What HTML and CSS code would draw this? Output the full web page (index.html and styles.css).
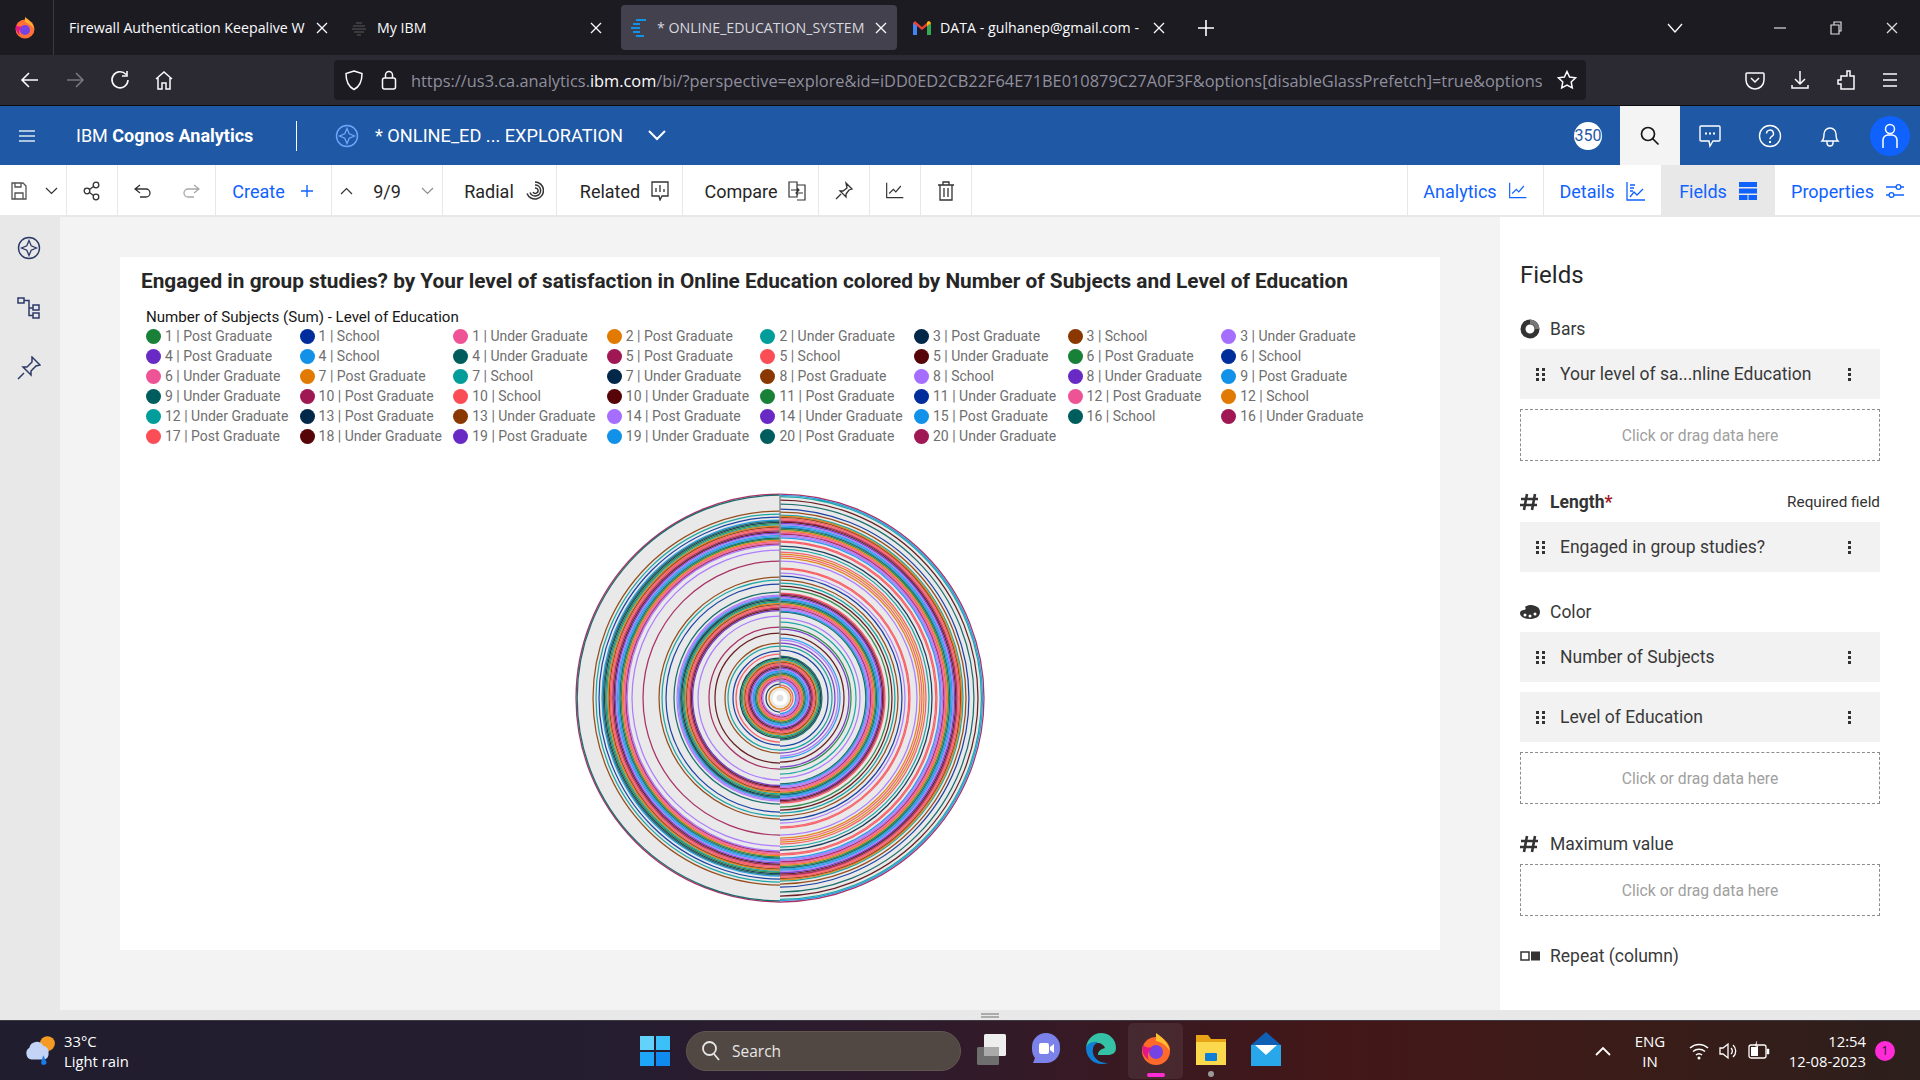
FILE: index.html
```html
<!DOCTYPE html>
<html>
<head>
    <title>IBM Cognos Analytics</title>
    <link rel="stylesheet" href="styles.css">
</head>
<body>
    <svg class="sprite" width="0" height="0">
        <defs>
            <g id="i-close"><path d="M3 3l10 10M13 3L3 13" fill="none" stroke="currentColor" stroke-width="1.3"/></g>
            <g id="i-drag"><path d="M0 0h3v3H0zM6 0h3v3H6zM0 5h3v3H0zM6 5h3v3H6zM0 10h3v3H0zM6 10h3v3H6z" fill="#333"/></g>
            <g id="i-kebab"><path d="M0 0h3v3H0zM0 5h3v3H0zM0 10h3v3H0z" fill="#333"/></g>
            <g id="i-hash"><path d="M7 2L4 18M15 2l-3 16M1 7h17M0 13h17" fill="none" stroke="#333" stroke-width="2.6"/></g>
            <g id="i-explore"><circle cx="12" cy="12" r="10.5" fill="none" stroke="currentColor" stroke-width="1.4"/><path d="M12 4.500l2.200 5.300 5.300 2.200-5.300 2.200-2.200 5.300-2.200-5.300L4.500 12l5.300-2.200z" fill="none" stroke="currentColor" stroke-width="1.3"/></g>
            <g id="i-trend"><path d="M2 2v18h20M5 15l5-5 3 3 6-7" fill="none" stroke="currentColor" stroke-width="1.4"/></g>
        </defs>
    </svg>

    <div class="tabbar">
        <div class="ff-cell">
            <svg width="22" height="24" viewBox="0 0 22 24"><circle cx="11" cy="13" r="9.500" fill="#ff7139"/><path d="M11 1c4 3 8 6 9 12-3-4-6-6-9-7z" fill="#ffb02e"/><circle cx="11" cy="14" r="5" fill="#7542e5"/><path d="M2 9c2 2 5 2 7 1-3 2-5 6-3 9-3-2-5-6-4-10z" fill="#e31587"/></svg>
        </div>
        <div class="tab tab-first">
            <span class="tab-text">Firewall Authentication Keepalive W</span>
            <svg class="tab-x" width="16" height="16"><use href="#i-close"/></svg>
        </div>
        <div class="tab tab-second">
            <svg width="18" height="18" viewBox="0 0 18 18"><path d="M6 3h6v2H6zM3 6h12v2H3zM2 9h14v2H2zM4 12h10v2H4zM7 15h4v2H7z" fill="#3a3a3a"/></svg>
            <span class="tab-text">My IBM</span>
            <svg class="tab-x" width="16" height="16"><use href="#i-close"/></svg>
        </div>
        <div class="tab tab-active">
            <svg width="18" height="20" viewBox="0 0 18 20"><path d="M6 1h10v2H6zM3 5h7v2H3zM1 9h9v2H1zM3 13h7v2H3zM6 17h8v2H6z" fill="#1192e8"/></svg>
            <span class="tab-text">* ONLINE_EDUCATION_SYSTEM</span>
            <svg class="tab-x" width="16" height="16"><use href="#i-close"/></svg>
        </div>
        <div class="tab tab-last">
            <svg width="18" height="14" viewBox="0 0 18 14"><path d="M0 2l2-2 7 6 7-6 2 2v12h-4V5L9 9 4 5v9H0z" fill="#ea4335"/><path d="M0 2v12h4V5z" fill="#4285f4"/><path d="M14 5v9h4V2z" fill="#34a853"/><path d="M16 0l2 2-4 3V1z" fill="#fbbc04"/></svg>
            <span class="tab-text">DATA - gulhanep@gmail.com -</span>
            <svg class="tab-x" width="16" height="16"><use href="#i-close"/></svg>
        </div>
        <svg class="tab-plus" width="18" height="18" viewBox="0 0 18 18"><path d="M9 1v16M1 9h16" stroke="#fff" stroke-width="1.6"/></svg>
        <div class="grow"></div>
        <svg class="tab-list" width="16" height="10" viewBox="0 0 16 10"><path d="M1 1l7 8 7-8" fill="none" stroke="#fff" stroke-width="1.3"/></svg>
        <div class="win-btn"><svg width="14" height="14" viewBox="0 0 14 14"><path d="M1 7h12" stroke="#ddd" stroke-width="1.2"/></svg></div>
        <div class="win-btn"><svg width="14" height="14" viewBox="0 0 14 14"><path d="M2 4h8v9H2zM5 4V1h7v9h-2" fill="none" stroke="#ddd" stroke-width="1.2"/></svg></div>
        <div class="win-btn"><svg width="16" height="16" class="win-x"><use href="#i-close"/></svg></div>
    </div>

    <div class="navbar">
        <svg class="nav-icon nav-back" width="20" height="18" viewBox="0 0 20 18"><path d="M18 9H2M9 2L2 9l7 7" fill="none" stroke="#fbfbfe" stroke-width="1.6"/></svg>
        <svg class="nav-icon nav-fwd" width="20" height="18" viewBox="0 0 20 18"><path d="M2 9h16M11 2l7 7-7 7" fill="none" stroke="#77767c" stroke-width="1.6"/></svg>
        <svg class="nav-icon nav-reload" width="20" height="20" viewBox="0 0 20 20"><path d="M16 4.500A8 8 0 1 0 18 10M17 1v5h-5" fill="none" stroke="#fbfbfe" stroke-width="1.6"/></svg>
        <svg class="nav-icon nav-home" width="20" height="20" viewBox="0 0 20 20"><path d="M2 9l8-7 8 7M4 8v11h4v-6h4v6h4V8" fill="none" stroke="#fbfbfe" stroke-width="1.5"/></svg>
        <div class="urlbox">
            <svg width="20" height="22" viewBox="0 0 20 22"><path d="M10 2l8 2.500c0 8-2 13-8 16-6-3-8-8-8-16z" fill="none" stroke="#fbfbfe" stroke-width="1.5"/></svg>
            <svg class="url-lock" width="16" height="20" viewBox="0 0 16 20"><rect x="1.500" y="8" width="13" height="11" rx="2" fill="none" stroke="#fbfbfe" stroke-width="1.5"/><path d="M4.500 8V5a3.500 3.500 0 0 1 7 0v3" fill="none" stroke="#fbfbfe" stroke-width="1.5"/></svg>
            <div class="url-text">https://us3.ca.analytics.<b>ibm.com</b>/bi/?perspective=explore&amp;id=iDD0ED2CB22F64E71BE010879C27A0F3F&amp;options[disableGlassPrefetch]=true&amp;options</div>
            <svg width="20" height="20" viewBox="0 0 20 20"><path d="M10 1.500l2.600 5.500 6 .8-4.400 4.100 1.100 6L10 15l-5.300 2.900 1.100-6L1.400 7.800l6-.8z" fill="none" stroke="#fbfbfe" stroke-width="1.5"/></svg>
        </div>
        <svg class="nav-icon nav-pocket" width="20" height="20" viewBox="0 0 20 20"><path d="M2 3h16a1 1 0 0 1 1 1v6a9 9 0 0 1-18 0V4a1 1 0 0 1 1-1zM6 8l4 4 4-4" fill="none" stroke="#fbfbfe" stroke-width="1.500"/></svg>
        <svg class="nav-icon nav-down" width="20" height="20" viewBox="0 0 20 20"><path d="M10 1v13M5 9l5 5 5-5M2 15v3h16v-3" fill="none" stroke="#fbfbfe" stroke-width="1.500"/></svg>
        <svg class="nav-icon nav-ext" width="20" height="22" viewBox="0 0 20 22"><path d="M11 2h3v5h4v13H5v-5H2v-4h3V7h6z" fill="none" stroke="#fbfbfe" stroke-width="1.500"/></svg>
        <svg class="nav-icon nav-menu" width="18" height="16" viewBox="0 0 18 16"><path d="M2 2h14M2 8h14M2 14h14" stroke="#fbfbfe" stroke-width="1.500"/></svg>
    </div>

    <div class="appbar">
        <svg class="app-menu" width="16" height="14" viewBox="0 0 16 14"><path d="M0 2h16M0 7h16M0 12h16" stroke="#dce6f5" stroke-width="1.600"/></svg>
        <div class="app-name">IBM <b>Cognos Analytics</b></div>
        <div class="app-sep"></div>
        <svg class="app-explore" width="24" height="24" viewBox="0 0 24 24"><use href="#i-explore"/></svg>
        <div class="app-title">* ONLINE_ED ... EXPLORATION</div>
        <svg class="app-chev" width="18" height="11" viewBox="0 0 18 11"><path d="M1 1l8 8 8-8" fill="none" stroke="#fff" stroke-width="2"/></svg>
        <div class="grow"></div>
        <div class="app-badge">350</div>
        <div class="app-search"><svg width="20" height="20" viewBox="0 0 20 20"><circle cx="8" cy="8" r="6.500" fill="none" stroke="#161616" stroke-width="1.700"/><path d="M12.500 12.500l6 6" stroke="#161616" stroke-width="1.700"/></svg></div>
        <div class="app-btn"><svg width="22" height="24" viewBox="0 0 22 24"><path d="M2 2h18a1 1 0 0 1 1 1v13a1 1 0 0 1-1 1h-6l-3 5-1-5H2a1 1 0 0 1-1-1V3a1 1 0 0 1 1-1z" fill="none" stroke="#fff" stroke-width="1.400"/><path d="M6 8.500h2v2H6zM10 8.500h2v2h-2zM14 8.500h2v2h-2z" fill="#fff"/></svg></div>
        <div class="app-btn"><svg width="24" height="24" viewBox="0 0 24 24"><circle cx="12" cy="12" r="10.500" fill="none" stroke="#fff" stroke-width="1.400"/><path d="M8.500 9.500a3.500 3.500 0 1 1 5 3.200c-1 .5-1.500 1.300-1.500 2.500" fill="none" stroke="#fff" stroke-width="1.400"/><path d="M11 17h2v2h-2z" fill="#fff"/></svg></div>
        <div class="app-btn"><svg width="22" height="24" viewBox="0 0 22 24"><path d="M3 17c2-2 2-4 2-7a6 6 0 0 1 12 0c0 3 0 5 2 7zM8 17v2a3 3 0 0 0 6 0v-2" fill="none" stroke="#fff" stroke-width="1.400"/></svg></div>
        <div class="app-user"><svg width="18" height="26" viewBox="0 0 18 26"><circle cx="9" cy="6" r="4.500" fill="none" stroke="#fff" stroke-width="1.500"/><path d="M2 25v-8a5 5 0 0 1 5-5h4a5 5 0 0 1 5 5v8" fill="none" stroke="#fff" stroke-width="1.500"/></svg></div>
    </div>

    <div class="toolbar">
        <div class="seg seg-save">
            <svg width="16" height="18" viewBox="0 0 16 18"><path d="M1 1h11l3 3v13H1zM4 17v-6h8v6M4 1v4h6V1" fill="none" stroke="#525252" stroke-width="1.300"/></svg>
            <svg width="13" height="8" viewBox="0 0 13 8"><path d="M1 1l5.500 5.500L12 1" fill="none" stroke="#333" stroke-width="1.200"/></svg>
        </div>
        <div class="seg seg-share">
            <svg width="18" height="20" viewBox="0 0 18 20"><circle cx="13" cy="4" r="2.800" fill="none" stroke="#333" stroke-width="1.300"/><circle cx="13" cy="16" r="2.800" fill="none" stroke="#333" stroke-width="1.300"/><circle cx="4" cy="10" r="2.800" fill="none" stroke="#333" stroke-width="1.300"/><path d="M6.500 8.500l4-3M6.500 11.500l4 3" stroke="#333" stroke-width="1.300"/></svg>
        </div>
        <div class="seg seg-undo">
            <svg width="18" height="14" viewBox="0 0 18 14"><path d="M6 1L1 5l5 4M1 5h11a4 4 0 0 1 0 8H6" fill="none" stroke="#333" stroke-width="1.300"/></svg>
            <svg width="18" height="14" viewBox="0 0 18 14"><path d="M12 1l5 4-5 4M17 5H6a4 4 0 0 0 0 8h6" fill="none" stroke="#a8a8a8" stroke-width="1.300"/></svg>
        </div>
        <div class="seg seg-create">
            <span class="blue">Create</span>
            <svg width="12" height="12" viewBox="0 0 12 12"><path d="M6 0v12M0 6h12" stroke="#0f62fe" stroke-width="1.400"/></svg>
        </div>
        <div class="seg seg-page">
            <svg width="13" height="8" viewBox="0 0 13 8"><path d="M1 7l5.500-5.500L12 7" fill="none" stroke="#333" stroke-width="1.200"/></svg>
            <span>9/9</span>
            <svg width="13" height="8" viewBox="0 0 13 8"><path d="M1 1l5.500 5.500L12 1" fill="none" stroke="#8d8d8d" stroke-width="1.200"/></svg>
        </div>
        <div class="seg seg-radial">
            <span>Radial</span>
            <svg width="20" height="20" viewBox="0 0 20 20"><path d="M11 1a8.500 8.500 0 1 1-8 11.500M11 4a5.500 5.500 0 1 1-5 7.500M11 7a2.700 2.700 0 1 1-2 4" fill="none" stroke="#333" stroke-width="1.500"/></svg>
        </div>
        <div class="seg seg-related">
            <span>Related</span>
            <svg width="18" height="20" viewBox="0 0 18 20"><path d="M1 1h16v14h-6l-2 4-1-4H1zM5 11V7M9 11V4M13 11V8" fill="none" stroke="#333" stroke-width="1.300"/></svg>
        </div>
        <div class="seg seg-compare">
            <span>Compare</span>
            <svg width="18" height="20" viewBox="0 0 18 20"><path d="M1 1h8v15H1zM9 4h8v15H9M3 9h8M9 7l2 2-2 2M15 12H8M10 10l-2 2 2 2" fill="none" stroke="#333" stroke-width="1.200"/></svg>
        </div>
        <div class="seg seg-icon">
            <svg width="20" height="20" viewBox="0 0 20 20"><path d="M12 2l6 6-3 1-3 4 0 3-6-6 3 0 4-3zM7 13l-5 5" fill="none" stroke="#333" stroke-width="1.300"/></svg>
        </div>
        <div class="seg seg-icon">
            <svg width="20" height="20" viewBox="0 0 24 24" class="dark"><use href="#i-trend"/></svg>
        </div>
        <div class="seg seg-icon">
            <svg width="16" height="20" viewBox="0 0 16 20"><path d="M0 4h16M5 4V1h6v3M2 4v15h12V4M6 7v9M10 7v9" fill="none" stroke="#333" stroke-width="1.300"/></svg>
        </div>
        <div class="grow"></div>
        <div class="seg seg-analytics">
            <span class="blue">Analytics</span>
            <svg width="20" height="20" viewBox="0 0 24 24" class="blue"><use href="#i-trend"/></svg>
        </div>
        <div class="seg seg-details">
            <span class="blue">Details</span>
            <svg width="20" height="20" viewBox="0 0 20 20"><path d="M1 1v18h18M4 4h5M4 7h4M4 10h3M4 16l4-5 3 3 6-6" fill="none" stroke="#0f62fe" stroke-width="1.300"/></svg>
        </div>
        <div class="seg seg-fields">
            <span class="blue">Fields</span>
            <svg width="18" height="18" viewBox="0 0 18 18"><path d="M0 0h18v5H0zM0 6.500h18v5H0zM0 13h8.500v5H0zM9.500 13H18v5H9.500z" fill="#0f62fe"/></svg>
        </div>
        <div class="seg seg-props">
            <span class="blue">Properties</span>
            <svg width="18" height="18" viewBox="0 0 18 18"><path d="M0 5h10M15 5h3M0 13h3M8 13h10" stroke="#0f62fe" stroke-width="1.300"/><circle cx="12.500" cy="5" r="2.400" fill="none" stroke="#0f62fe" stroke-width="1.300"/><circle cx="5.500" cy="13" r="2.400" fill="none" stroke="#0f62fe" stroke-width="1.300"/></svg>
        </div>
    </div>

    <div class="main">
        <div class="rail">
            <svg width="24" height="24" viewBox="0 0 24 24" class="rail-icon"><use href="#i-explore"/></svg>
            <svg width="24" height="24" viewBox="0 0 24 24" class="rail-icon"><path d="M1 2h6v5H1zM7 4.500h5v15h4M12 12h4M16 9h6v5h-6zM16 17h6v5h-6z" fill="none" stroke="currentColor" stroke-width="1.500"/></svg>
            <svg width="24" height="24" viewBox="0 0 24 24" class="rail-icon"><path d="M15 1l8 8-4 1-5 5 0 4-8-8 4 0 5-5zM7 17l-6 6" fill="none" stroke="currentColor" stroke-width="1.500"/></svg>
        </div>

        <div class="canvas">
            <div class="card">
                <h1 class="card-title">Engaged in group studies? by Your level of satisfaction in Online Education colored by Number of Subjects and Level of Education</h1>
                <div class="legend-title">Number of Subjects (Sum) - Level of Education</div>
                <div class="legend">
                    <div class="item"><i class="green"></i>1 | Post Graduate</div>
                    <div class="item"><i class="blue-d"></i>1 | School</div>
                    <div class="item"><i class="pink"></i>1 | Under Graduate</div>
                    <div class="item"><i class="orange"></i>2 | Post Graduate</div>
                    <div class="item"><i class="teal"></i>2 | Under Graduate</div>
                    <div class="item"><i class="navy"></i>3 | Post Graduate</div>
                    <div class="item"><i class="brown"></i>3 | School</div>
                    <div class="item"><i class="lilac"></i>3 | Under Graduate</div>

                    <div class="item"><i class="purple"></i>4 | Post Graduate</div>
                    <div class="item"><i class="sky"></i>4 | School</div>
                    <div class="item"><i class="dteal"></i>4 | Under Graduate</div>
                    <div class="item"><i class="magenta"></i>5 | Post Graduate</div>
                    <div class="item"><i class="coral"></i>5 | School</div>
                    <div class="item"><i class="dred"></i>5 | Under Graduate</div>
                    <div class="item"><i class="green"></i>6 | Post Graduate</div>
                    <div class="item"><i class="blue-d"></i>6 | School</div>

                    <div class="item"><i class="pink"></i>6 | Under Graduate</div>
                    <div class="item"><i class="orange"></i>7 | Post Graduate</div>
                    <div class="item"><i class="teal"></i>7 | School</div>
                    <div class="item"><i class="navy"></i>7 | Under Graduate</div>
                    <div class="item"><i class="brown"></i>8 | Post Graduate</div>
                    <div class="item"><i class="lilac"></i>8 | School</div>
                    <div class="item"><i class="purple"></i>8 | Under Graduate</div>
                    <div class="item"><i class="sky"></i>9 | Post Graduate</div>

                    <div class="item"><i class="dteal"></i>9 | Under Graduate</div>
                    <div class="item"><i class="magenta"></i>10 | Post Graduate</div>
                    <div class="item"><i class="coral"></i>10 | School</div>
                    <div class="item"><i class="dred"></i>10 | Under Graduate</div>
                    <div class="item"><i class="green"></i>11 | Post Graduate</div>
                    <div class="item"><i class="blue-d"></i>11 | Under Graduate</div>
                    <div class="item"><i class="pink"></i>12 | Post Graduate</div>
                    <div class="item"><i class="orange"></i>12 | School</div>

                    <div class="item"><i class="teal"></i>12 | Under Graduate</div>
                    <div class="item"><i class="navy"></i>13 | Post Graduate</div>
                    <div class="item"><i class="brown"></i>13 | Under Graduate</div>
                    <div class="item"><i class="lilac"></i>14 | Post Graduate</div>
                    <div class="item"><i class="purple"></i>14 | Under Graduate</div>
                    <div class="item"><i class="sky"></i>15 | Post Graduate</div>
                    <div class="item"><i class="dteal"></i>16 | School</div>
                    <div class="item"><i class="magenta"></i>16 | Under Graduate</div>

                    <div class="item"><i class="coral"></i>17 | Post Graduate</div>
                    <div class="item"><i class="dred"></i>18 | Under Graduate</div>
                    <div class="item"><i class="purple"></i>19 | Post Graduate</div>
                    <div class="item"><i class="sky"></i>19 | Under Graduate</div>
                    <div class="item"><i class="dteal"></i>20 | Post Graduate</div>
                    <div class="item"><i class="magenta"></i>20 | Under Graduate</div>
                </div>
                <svg id="radial" class="radial" width="420" height="420" viewBox="-210 -210 420 420"></svg>
            </div>
        </div>

        <div class="panel">
            <h2 class="panel-title">Fields</h2>

            <div class="slot-head">
                <svg width="20" height="20" viewBox="0 0 20 20"><circle cx="10" cy="10" r="7" fill="none" stroke="#333" stroke-width="5"/><path d="M10 0.500a9.500 9.500 0 0 1 9.500 9.500h-4.500a5 5 0 0 0-5-5z" fill="#777"/></svg>
                <span>Bars</span>
            </div>
            <div class="field">
                <svg class="drag" width="9" height="13"><use href="#i-drag"/></svg>
                <span class="field-name">Your level of sa...nline Education</span>
                <svg class="kebab" width="3" height="13"><use href="#i-kebab"/></svg>
            </div>
            <div class="drop">Click or drag data here</div>

            <div class="slot-head slot-length">
                <svg width="20" height="20" viewBox="0 0 20 20"><use href="#i-hash"/></svg>
                <span class="strong">Length<em>*</em></span>
                <small>Required field</small>
            </div>
            <div class="field">
                <svg class="drag" width="9" height="13"><use href="#i-drag"/></svg>
                <span class="field-name">Engaged in group studies?</span>
                <svg class="kebab" width="3" height="13"><use href="#i-kebab"/></svg>
            </div>

            <div class="slot-head slot-color">
                <svg width="20" height="16" viewBox="0 0 20 16"><path d="M10 1c5 0 10 2 10 7s-5 7-10 7S0 13 0 9c0-2 2-3 4-3 2 0 2-2 1-3 1-1 3-2 5-2z" fill="#333"/><circle cx="5" cy="11" r="1.500" fill="#fff"/><circle cx="10" cy="12" r="1.500" fill="#fff"/><circle cx="15" cy="10" r="1.500" fill="#fff"/></svg>
                <span>Color</span>
            </div>
            <div class="field">
                <svg class="drag" width="9" height="13"><use href="#i-drag"/></svg>
                <span class="field-name">Number of Subjects</span>
                <svg class="kebab" width="3" height="13"><use href="#i-kebab"/></svg>
            </div>
            <div class="field field-next">
                <svg class="drag" width="9" height="13"><use href="#i-drag"/></svg>
                <span class="field-name">Level of Education</span>
                <svg class="kebab" width="3" height="13"><use href="#i-kebab"/></svg>
            </div>
            <div class="drop">Click or drag data here</div>

            <div class="slot-head slot-max">
                <svg width="20" height="20" viewBox="0 0 20 20"><use href="#i-hash"/></svg>
                <span>Maximum value</span>
            </div>
            <div class="drop drop-max">Click or drag data here</div>

            <div class="slot-head slot-repeat">
                <svg width="20" height="10" viewBox="0 0 20 10"><rect x="1" y="1" width="8" height="8" fill="#fff" stroke="#333" stroke-width="1.500"/><rect x="11" y="0.500" width="9" height="9" fill="#333"/></svg>
                <span>Repeat (column)</span>
            </div>
        </div>
    </div>

    <div class="strip">
        <svg width="18" height="5" viewBox="0 0 18 5"><path d="M0 1h18M0 4h18" stroke="#6f6f6f" stroke-width="1"/></svg>
    </div>

    <div class="taskbar">
        <div class="weather">
            <svg width="34" height="34" viewBox="0 0 32 32"><circle cx="23" cy="9" r="7" fill="#f59a23"/><path d="M8 24a6 6 0 0 1-2-11 7 7 0 0 1 13-2 6 6 0 0 1 5 7 5 5 0 0 1-4 6z" fill="#c3d4f7"/><path d="M19 20l3 6a2.500 2.500 0 0 1-5 1z" fill="#1a7ce8"/></svg>
            <div class="weather-text"><div>33°C</div><div>Light rain</div></div>
        </div>
        <div class="start">
            <svg width="30" height="30" viewBox="0 0 30 30"><path d="M0 0h14v14H0z" fill="#62d2fa"/><path d="M16 0h14v14H16z" fill="#3cc0f8"/><path d="M0 16h14v14H0z" fill="#1ea7f8"/><path d="M16 16h14v14H16z" fill="#0f8bf0"/></svg>
        </div>
        <div class="search">
            <svg width="20" height="22" viewBox="0 0 20 22"><circle cx="8.500" cy="8.500" r="6.500" fill="none" stroke="#e6e6e6" stroke-width="1.800"/><path d="M13 14l5 6" stroke="#e6e6e6" stroke-width="1.800"/></svg>
            <span>Search</span>
        </div>
        <div class="task-icons">
            <div class="task"><svg width="32" height="32" viewBox="0 0 32 32"><rect x="2" y="14" width="22" height="18" rx="1.500" fill="#6e6e6e"/><rect x="9" y="1" width="22" height="22" rx="1.500" fill="#eee"/><rect x="9" y="14" width="15" height="9" fill="#aaa"/></svg></div>
            <div class="task"><svg width="30" height="34" viewBox="0 0 30 34"><path d="M15 1a14 14 0 0 1 14 14v2a14 14 0 0 1-14 14H2l2-5a14 14 0 0 1-3-9v-2A14 14 0 0 1 15 1z" fill="#7b83eb"/><rect x="8" y="11" width="10" height="11" rx="2" fill="#fff"/><path d="M19 15l4-3v9l-4-3z" fill="#fff"/></svg></div>
            <div class="task"><svg width="32" height="34" viewBox="0 0 32 34"><path d="M1 17C1 8 8 1 16 1s15 6 15 15c0 5-4 7-8 7H13c0-4 3-6 7-7-1-3-4-5-7-5-6 0-12 3-12 6z" fill="#35c1a5"/><path d="M1 17c0-5 6-8 12-7-4 2-6 6-5 11 1 6 7 10 14 10 1 0 2 0 2-.5A16 16 0 0 1 1 17z" fill="#0f7fd6"/></svg></div>
            <div class="task task-on">
                <svg width="30" height="34" viewBox="0 0 30 34"><circle cx="15" cy="19" r="14" fill="#ff6a2c"/><path d="M15 1c6 4 12 9 14 18-4-6-8-9-14-10z" fill="#ffc02e"/><circle cx="15" cy="20" r="7" fill="#7542e5"/><path d="M2 13c3 3 7 3 10 2-4 3-7 8-4 13-5-3-8-9-6-15z" fill="#e31587"/></svg>
                <b></b>
            </div>
            <div class="task task-open">
                <svg width="30" height="32" viewBox="0 0 30 32"><path d="M0 2h12l3 4h15v26H0z" fill="#e8a317"/><path d="M0 9h30v23H0z" fill="#fcd94c"/><rect x="9" y="20" width="12" height="8" rx="1" fill="#0f7fd6"/></svg>
                <b></b>
            </div>
            <div class="task"><svg width="30" height="34" viewBox="0 0 30 34"><path d="M15 0l15 13v21H0V13z" fill="#0f5fb4"/><path d="M0 13h30v21H0z" fill="#28a8ea"/><path d="M4 13h22l-11 10z" fill="#fff"/></svg></div>
        </div>
        <div class="grow"></div>
        <div class="tray">
            <svg class="tray-up" width="16" height="10" viewBox="0 0 16 10"><path d="M1 9l7-7 7 7" fill="none" stroke="#fff" stroke-width="1.800"/></svg>
            <div class="lang"><div>ENG</div><div>IN</div></div>
            <svg class="tray-wifi" width="20" height="20" viewBox="0 0 20 20"><path d="M1 7a13 13 0 0 1 18 0M4 10.500a9 9 0 0 1 12 0M7 14a4.500 4.500 0 0 1 6 0" fill="none" stroke="#fff" stroke-width="1.500"/><circle cx="10" cy="17" r="1.500" fill="#fff"/></svg>
            <svg class="tray-vol" width="20" height="20" viewBox="0 0 20 20"><path d="M1 7h3l5-4v14l-5-4H1zM12 7a4 4 0 0 1 0 6M14 4a8 8 0 0 1 0 12" fill="none" stroke="#fff" stroke-width="1.300"/></svg>
            <svg class="tray-bat" width="22" height="20" viewBox="0 0 22 20"><rect x="1" y="4" width="17" height="13" rx="2" fill="none" stroke="#fff" stroke-width="1.300"/><rect x="3" y="6" width="7" height="9" fill="#fff"/><path d="M19 8h2v5h-2zM9 0l-2 5h3l-2 5" fill="#fff" stroke="#fff" stroke-width=".5"/></svg>
            <div class="clock"><div>12:54</div><div>12-08-2023</div></div>
            <div class="notify">1</div>
        </div>
    </div>

    <script src="chart.js"></script>
</body>
</html>
```

FILE: styles.css
```css
* {
    box-sizing: border-box;
}

html, body {
    margin: 0;
    padding: 0;
}

body {
    width: 1920px;
    height: 1080px;
    overflow: hidden;
    display: flex;
    flex-direction: column;
    font-family: Roboto, "Noto Sans", sans-serif;
    background: #f4f4f4;
    color: #262626;
}

svg {
    display: block;
    flex: none;
}

.sprite {
    position: absolute;
}

.grow {
    flex: 1;
}

/* browser tabs */
.tabbar {
    height: 55px;
    background: #1c1b22;
    display: flex;
    align-items: center;
    color: #fbfbfe;
    font-family: "Open Sans", sans-serif;
    font-size: 14.200px;
}

.ff-cell {
    width: 54px;
    height: 55px;
    border-right: 1px solid #3a3944;
    display: flex;
    align-items: center;
    justify-content: center;
    padding-right: 4px;
}

.tab {
    height: 45px;
    display: flex;
    align-items: center;
    gap: 9px;
    color: #fbfbfe;
}

.tab-text {
    flex: 1;
    white-space: nowrap;
}

.tab-x {
    color: #fbfbfe;
}

.tab-first {
    width: 276px;
    padding: 0 7px 0 15px;
}

.tab-second {
    width: 275px;
    margin-left: 9px;
    padding: 0 10px 0 11px;
}

.tab-active {
    width: 276px;
    margin-left: 7px;
    padding: 0 12px 0 9px;
    background: #42414d;
    border-radius: 4px;
    color: #d8d8df;
}

.tab-last {
    width: 270px;
    margin-left: 3px;
    padding: 0 3px 0 13px;
}

.tab-plus {
    margin-left: 27px;
}

.tab-list {
    margin-right: 69px;
}

.win-btn {
    width: 56px;
    display: flex;
    justify-content: center;
}

.win-x {
    color: #ddd;
}

/* address bar */
.navbar {
    height: 51px;
    background: #2b2a33;
    border-bottom: 1px solid #0c0c0d;
    display: flex;
    align-items: center;
    padding-left: 20px;
}

.nav-fwd {
    margin-left: 25px;
}

.nav-reload {
    margin-left: 25px;
}

.nav-home {
    margin-left: 24px;
}

.urlbox {
    width: 1252px;
    height: 40px;
    margin-left: 160px;
    background: #1c1b22;
    border-radius: 4px;
    display: flex;
    align-items: center;
    padding: 0 9px 0 10px;
}

.url-lock {
    margin-left: 17px;
}

.url-text {
    width: 1134px;
    margin: 2px 12px 0 14px;
    white-space: nowrap;
    color: #8f8f9d;
    font-family: "Open Sans", sans-serif;
    font-size: 16.380px;
}

.url-text b {
    color: #fbfbfe;
    font-weight: 400;
}

.nav-pocket {
    margin-left: 159px;
}

.nav-down {
    margin-left: 25px;
}

.nav-ext {
    margin-left: 26px;
}

.nav-menu {
    margin-left: 25px;
}

/* cognos header */
.appbar {
    height: 59px;
    background: #1f58a4;
    display: flex;
    align-items: center;
    color: #fff;
    padding-left: 19px;
}

.app-menu {
    margin-right: 41px;
}

.app-name {
    width: 220px;
    font-size: 18px;
    color: #fff;
}

.app-name b {
    font-weight: 700;
}

.app-sep {
    width: 1px;
    height: 30px;
    background: #fff;
}

.app-explore {
    margin-left: 38px;
    color: #6ea6ff;
}

.app-title {
    width: 270px;
    margin-left: 16px;
    font-size: 18.200px;
    white-space: nowrap;
}

.app-chev {
    margin-left: 3px;
}

.app-badge {
    width: 28px;
    height: 28px;
    border-radius: 50%;
    background: #fff;
    color: #1f58a4;
    font-size: 16px;
    display: flex;
    align-items: center;
    justify-content: center;
    margin-right: 18px;
}

.app-search {
    width: 60px;
    height: 59px;
    background: #f4f4f4;
    display: flex;
    align-items: center;
    justify-content: center;
}

.app-btn {
    width: 60px;
    display: flex;
    justify-content: center;
}

.app-user {
    width: 40px;
    height: 40px;
    margin: 0 10px;
    border-radius: 50%;
    background: #0f62fe;
    display: flex;
    align-items: center;
    justify-content: center;
}

/* action toolbar */
.toolbar {
    height: 52px;
    background: #fff;
    border-bottom: 2px solid #e8e8e8;
    display: flex;
    font-size: 18px;
    color: #262626;
}

.seg {
    display: flex;
    align-items: center;
    justify-content: center;
    padding-top: 2px;
    border-right: 1px solid #e8e8e8;
}

.blue {
    color: #0f62fe;
}

.dark {
    color: #333;
}

.seg-save {
    width: 67px;
    gap: 18px;
    padding-left: 2px;
}

.seg-share {
    width: 51px;
}

.seg-undo {
    width: 98px;
    gap: 30px;
}

.seg-create {
    width: 116px;
    gap: 16px;
    padding-right: 2px;
}

.seg-page {
    width: 111px;
    gap: 20px;
}

.seg-radial {
    width: 114px;
    gap: 10px;
    padding-left: 9px;
}

.seg-related {
    width: 126px;
    gap: 11px;
    padding-left: 10px;
}

.seg-compare {
    width: 136px;
    gap: 10px;
    padding-left: 9px;
}

.seg-icon {
    width: 51px;
}

.seg-analytics {
    width: 137px;
    gap: 11px;
    border-left: 1px solid #e8e8e8;
}

.seg-details {
    width: 118px;
    gap: 11px;
}

.seg-fields {
    width: 113px;
    gap: 12px;
    background: #e8e8e8;
}

.seg-props {
    width: 145px;
    gap: 12px;
    border-right: none;
}

/* work area */
.main {
    flex: 1;
    display: flex;
    min-height: 0;
}

.rail {
    width: 60px;
    background: #e8e8e8;
    display: flex;
    flex-direction: column;
    align-items: center;
    gap: 36px;
    padding: 19px 2px 0 0;
}

.rail-icon {
    color: #2b3a67;
}

.canvas {
    flex: 1;
    background: #f3f3f3;
    padding: 40px 60px 0;
}

.card {
    height: 693px;
    background: #fff;
    padding-top: 12px;
}

.card-title {
    margin: 0 0 14px 21px;
    font-size: 20.800px;
    line-height: 24px;
    font-weight: 700;
    color: #262626;
    white-space: nowrap;
}

.legend-title {
    margin-left: 26px;
    font-size: 15.100px;
    line-height: 20px;
    color: #161616;
}

.legend {
    margin: -1px 0 0 26px;
    display: grid;
    grid-template-columns: repeat(8, 153.600px);
    grid-auto-rows: 20px;
}

.item {
    display: flex;
    align-items: center;
    gap: 4px;
    font-size: 14px;
    white-space: nowrap;
    color: #6f6f6f;
}

.item i {
    width: 15px;
    height: 15px;
    border-radius: 50%;
    flex: none;
}

.green { background: #198038; }
.blue-d { background: #002d9c; }
.pink { background: #ee5396; }
.orange { background: #e17a00; }
.teal { background: #009d9a; }
.navy { background: #012749; }
.brown { background: #8a3800; }
.lilac { background: #a56eff; }
.purple { background: #6929c4; }
.sky { background: #1192e8; }
.dteal { background: #005d5d; }
.magenta { background: #9f1853; }
.coral { background: #fa4d56; }
.dred { background: #570408; }

.radial {
    margin: 42px auto 0;
}

/* fields panel */
.panel {
    width: 420px;
    background: #fff;
    padding: 0 40px 0 20px;
    font-size: 17.500px;
    color: #393939;
}

.panel-title {
    margin: 42px 0 0;
    font-size: 24px;
    line-height: 32px;
    font-weight: 400;
    color: #262626;
}

.slot-head {
    height: 24px;
    display: flex;
    align-items: center;
    gap: 10px;
    margin-top: 26px;
    margin-bottom: 8px;
}

.slot-length {
    margin-top: 29px;
}

.slot-color {
    margin-top: 28px;
}

.slot-max {
    margin-top: 28px;
}

.slot-repeat {
    margin-top: 28px;
}

.strong {
    font-weight: 700;
    color: #333;
}

.strong em {
    font-style: normal;
    color: #a2191f;
}

.slot-head small {
    margin-left: auto;
    font-size: 15.300px;
    color: #333;
}

.field {
    height: 50px;
    background: #f2f2f2;
    display: flex;
    align-items: center;
    padding: 0 29px 0 16px;
}

.field-next {
    margin-top: 10px;
}

.field-name {
    flex: 1;
    margin-left: 15px;
}

.drop {
    height: 52px;
    margin-top: 10px;
    border: 1px dashed #8d8d8d;
    display: flex;
    align-items: center;
    justify-content: center;
    font-size: 15.700px;
    color: #a0a0a0;
}

.drop-max {
    margin-top: 0;
}

.strip {
    height: 10px;
    background: #e8e8e8;
    display: flex;
    justify-content: center;
    align-items: center;
    padding-left: 60px;
}

/* windows taskbar */
.taskbar {
    height: 60px;
    background: linear-gradient(90deg, #201d2e 0%, #241d30 30%, #2f1b2c 48%, #431717 70%, #3a1c18 85%, #2c1f1c 100%);
    border-top: 1px solid #3e3a44;
    display: flex;
    align-items: center;
    color: #fff;
    font-family: "Open Sans", sans-serif;
    font-size: 14px;
}

.weather {
    width: 640px;
    display: flex;
    align-items: center;
    padding-left: 23px;
    gap: 7px;
    line-height: 20px;
    font-size: 14.800px;
}

.start {
    width: 46px;
}

.search {
    width: 275px;
    height: 40px;
    background: #524843;
    border: 1px solid #615751;
    border-radius: 20px;
    display: flex;
    align-items: center;
    padding-left: 14px;
    gap: 11px;
    font-size: 15.500px;
    color: #e6e6e6;
}

.task-icons {
    display: flex;
    margin-left: 2px;
}

.task {
    width: 55px;
    height: 56px;
    display: flex;
    align-items: center;
    justify-content: center;
    padding-bottom: 4px;
    position: relative;
}

.task b {
    position: absolute;
    bottom: 2px;
    left: 50%;
    height: 4px;
    border-radius: 2px;
}

.task-on {
    background: rgba(255, 255, 255, 0.07);
    border-radius: 5px;
}

.task-on b {
    width: 18px;
    margin-left: -9px;
    background: #ff2bd6;
}

.task-open b {
    width: 6px;
    height: 6px;
    margin-left: -3px;
    background: #9a9a9a;
    border-radius: 50%;
}

.tray {
    display: flex;
    align-items: center;
    padding-right: 25px;
}

.tray-wifi {
    margin-left: 21px;
}

.tray-vol {
    margin-left: 10px;
}

.tray-bat {
    margin-left: 9px;
}

.lang {
    margin-left: 21px;
    text-align: center;
    line-height: 20px;
    width: 36px;
    font-size: 15px;
}

.clock {
    width: 96px;
    text-align: right;
    line-height: 20px;
    font-size: 14.800px;
}

.notify {
    width: 20px;
    height: 20px;
    margin-left: 9px;
    border-radius: 50%;
    background: #ff2bd6;
    color: #1c1b22;
    font-size: 12px;
    display: flex;
    align-items: center;
    justify-content: center;
}
```

FILE: chart.js
```js
// radial chart: two half discs of concentric rings
const PALETTE = ['#198038', '#002d9c', '#ee5396', '#e17a00', '#009d9a', '#012749', '#8a3800',
                 '#a56eff', '#6929c4', '#1192e8', '#005d5d', '#9f1853', '#fa4d56', '#570408'];
const [GREEN, BLUE, PINK, ORANGE, TEAL, NAVY, BROWN, LILAC, PURPLE, SKY, DTEAL, MAGENTA, CORAL, DRED] = PALETTE;

// order of the stripes inside the dense bands
const BAND = [LILAC, LILAC, SKY, DTEAL, NAVY, GREEN, TEAL, ORANGE, BROWN, CORAL, CORAL, MAGENTA, DRED, PURPLE, LILAC, SKY, SKY, DTEAL, GREEN, ORANGE, CORAL, PINK, MAGENTA];

const svg = document.getElementById('radial');
const NS = 'http://www.w3.org/2000/svg';

function add(tag, attrs) {
    const el = document.createElementNS(NS, tag);
    for (const k in attrs) el.setAttribute(k, attrs[k]);
    svg.appendChild(el);
}

function band(r1, r2, start) {
    const out = [];
    let i = start;
    for (let r = r1; r > r2; r -= 1.2) {
        out.push([r, BAND[i % BAND.length]]);
        i += 1;
    }
    return out;
}

const left = [
    [204, MAGENTA], [202.8, DTEAL],
    [187, BROWN], [184, TEAL], [181, BLUE],
    ...band(178, 152, 2),
    [148, LILAC], [137, MAGENTA], [121, BROWN], [118, TEAL], [114, BLUE], [106, DTEAL],
    ...band(103, 87, 0),
    [82, LILAC], [71, MAGENTA], [65, DRED], [55, BROWN], [52, TEAL], [47, BLUE], [44, CORAL],
    ...band(40, 16, 4),
    [14, NAVY], [11, ORANGE]
];

const right = [
    [204, MAGENTA], [202.6, SKY], [201.4, TEAL], [198, DRED], [194, DTEAL], [189, BLUE], [186, BROWN],
    ...band(183, 160, 6),
    [157, CORAL], [155.8, CORAL], [152, NAVY], [149, TEAL], [146, CORAL], [144, ORANGE], [142, CORAL], [140, ORANGE], [137, LILAC],
    [130, CORAL], [128.8, CORAL], [125, LILAC], [122, BLUE], [118, BROWN], [115, TEAL], [112, DRED], [109, GREEN],
    ...band(105, 85, 10),
    [80, LILAC], [76, TEAL], [71, GREEN], [69, PURPLE], [64, DRED], [60, SKY], [58, LILAC], [55, PURPLE], [52, TEAL],
    [48, BLUE],
    ...band(42, 15, 3),
    [13, CORAL], [11, ORANGE]
];

function half(r, side) {
    return 'M0 ' + (-r) + 'A' + r + ' ' + r + ' 0 0 ' + side + ' 0 ' + r;
}

add('circle', { cx: 0, cy: 0, r: 204, fill: '#e9e9e9' });
add('circle', { cx: 0, cy: 0, r: 7.5, fill: '#fff' });
add('circle', { cx: 0, cy: 0, r: 3.5, fill: '#e0e0e0' });

left.forEach(function (ring) {
    add('path', { d: half(ring[0], 0), fill: 'none', stroke: ring[1], 'stroke-width': 1.25, opacity: 0.88 });
});
right.forEach(function (ring) {
    add('path', { d: half(ring[0], 1), fill: 'none', stroke: ring[1], 'stroke-width': 1.25, opacity: 0.88 });
});

add('path', { d: 'M0 -204V-11', stroke: '#8d8d8d', 'stroke-width': 1.5 });
```
